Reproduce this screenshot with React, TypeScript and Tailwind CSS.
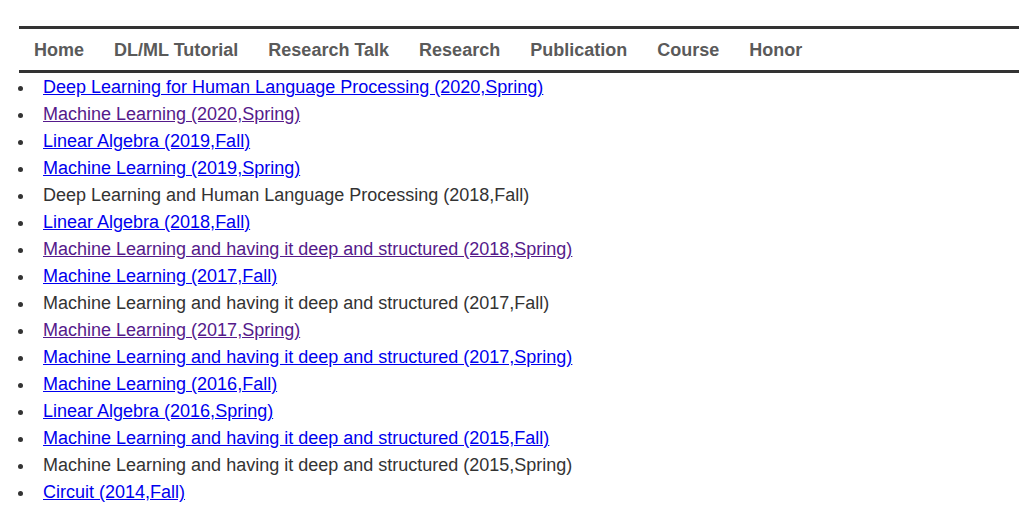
import React from "react";

type Item = { text: string; kind: "link" | "visited" | "plain" };

const items: Item[] = [
  { text: "Deep Learning for Human Language Processing (2020,Spring)", kind: "link" },
  { text: "Machine Learning (2020,Spring)", kind: "visited" },
  { text: "Linear Algebra (2019,Fall)", kind: "link" },
  { text: "Machine Learning (2019,Spring)", kind: "link" },
  { text: "Deep Learning and Human Language Processing (2018,Fall)", kind: "plain" },
  { text: "Linear Algebra (2018,Fall)", kind: "link" },
  { text: "Machine Learning and having it deep and structured (2018,Spring)", kind: "visited" },
  { text: "Machine Learning (2017,Fall)", kind: "link" },
  { text: "Machine Learning and having it deep and structured (2017,Fall)", kind: "plain" },
  { text: "Machine Learning (2017,Spring)", kind: "visited" },
  { text: "Machine Learning and having it deep and structured (2017,Spring)", kind: "link" },
  { text: "Machine Learning (2016,Fall)", kind: "link" },
  { text: "Linear Algebra (2016,Spring)", kind: "link" },
  { text: "Machine Learning and having it deep and structured (2015,Fall)", kind: "link" },
  { text: "Machine Learning and having it deep and structured (2015,Spring)", kind: "plain" },
  { text: "Circuit (2014,Fall)", kind: "link" },
];

const nav = ["Home", "DL/ML Tutorial", "Research Talk", "Research", "Publication", "Course", "Honor"];

export default function App() {
  return (
    <div className="bg-white min-h-[511px] pt-[26px] pl-[19px] text-[#333333] [font-family:'Liberation_Sans',Arial,sans-serif]">
      <div className="w-[1000px]">
        <nav className="flex border-t-[3px] border-b-[3px] border-[#333333] h-[47px] items-center pt-px">
          {nav.map((n) => (
            <a key={n} href="#" className="px-[15px] text-[18px] font-bold text-[#5a5a5a] no-underline leading-[41px]">
              {n}
            </a>
          ))}
        </nav>
        <ul className="list-none pl-0 mt-px">
          {items.map((it, i) => (
            <li key={i} className="flex items-center text-[18px] leading-[27px]">
              <span className="w-[24px] shrink-0 flex items-center">
                <span className="-ml-px mt-[2px] block w-[5px] h-[5px] rounded-full bg-[#333333]" />
              </span>
              {it.kind === "plain" ? (
                <span>{it.text}</span>
              ) : (
                <a
                  href="#"
                  className={
                    "underline " + (it.kind === "visited" ? "text-[#551a8b]" : "text-[#0000ee]")
                  }
                >
                  {it.text}
                </a>
              )}
            </li>
          ))}
        </ul>
      </div>
    </div>
  );
}
